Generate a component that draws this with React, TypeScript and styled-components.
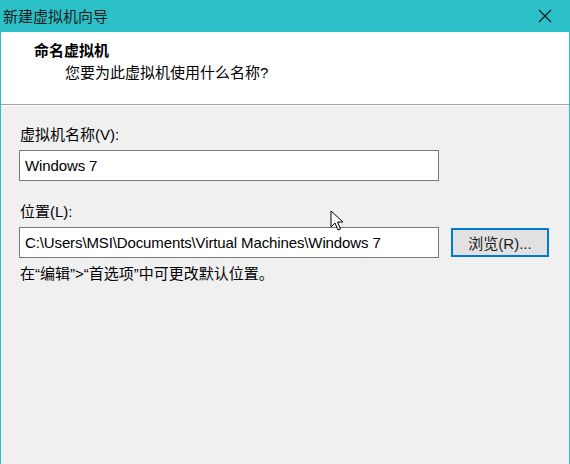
import React from "react";
import styled, { createGlobalStyle } from "styled-components";

const GlobalStyle = createGlobalStyle`
  html, body {
    margin: 0;
    padding: 0;
    background: #f0f0f0;
  }
  * {
    box-sizing: border-box;
  }
`;

const font = `"Segoe UI", "Liberation Sans", "Noto Sans CJK SC", sans-serif`;

const Window = styled.div`
  position: relative;
  width: 570px;
  height: 464px;
  display: flex;
  flex-direction: column;
  border-left: 1px solid #2cc0c8;
  border-right: 1px solid #2cc0c8;
  background: #f0f0f0;
  font-family: ${font};
  font-size: 15px;
  color: #000;
  overflow: hidden;
`;

const TitleBar = styled.div`
  height: 32px;
  flex-shrink: 0;
  background: #2cc0c8;
  display: flex;
  align-items: center;
  justify-content: space-between;
  padding: 0 0 0 3px;
  color: #1e1e1e;
  margin: 0 -1px;
`;

const TitleText = styled.span`
  font-size: 15px;
  line-height: 1;
`;

const CloseButton = styled.div`
  width: 46px;
  height: 32px;
  display: flex;
  align-items: center;
  justify-content: center;
  margin-right: 2px;
`;

const Header = styled.div`
  height: 73px;
  flex-shrink: 0;
  background: #fff;
  border-bottom: 1px solid #a0a0a0;
  box-shadow: 0 1px 0 #ffffff;
  padding: 8px 0 0 33px;
`;

const HeaderTitle = styled.div`
  font-weight: bold;
  font-size: 15px;
  line-height: 22px;
`;

const HeaderSub = styled.div`
  margin-left: 31px;
  line-height: 22px;
`;

const Body = styled.div`
  flex: 1;
  padding: 20px 0 0 18px;
  display: flex;
  flex-direction: column;
`;

const Label = styled.div<{ $top?: number }>`
  padding-left: 1px;
  line-height: 20px;
  margin-top: ${({ $top }) => $top ?? 0}px;
  margin-bottom: 5px;
`;

const Row = styled.div`
  display: flex;
  align-items: center;
  gap: 12px;
`;

const TextBox = styled.div`
  width: 420px;
  height: 31px;
  background: #fff;
  border: 1px solid #7a7a7a;
  padding: 0 0 0 5px;
  display: flex;
  align-items: center;
  line-height: 1;
  letter-spacing: -0.12px;
  white-space: nowrap;
  overflow: hidden;
`;

const Button = styled.div`
  width: 98px;
  height: 29px;
  background: #e1e1e1;
  border: 2px solid #0078d7;
  display: flex;
  align-items: center;
  justify-content: center;
  color: #1a1a1a;
`;

const Hint = styled.div`
  margin-top: 5px;
  padding-left: 1px;
  line-height: 22px;
`;

const Cursor = styled.svg`
  position: absolute;
  left: 329px;
  top: 210px;
`;

export default function App() {
  return (
    <>
      <GlobalStyle />
      <Window>
        <TitleBar>
          <TitleText>新建虚拟机向导</TitleText>
          <CloseButton>
            <svg width="14" height="14" viewBox="0 0 14 14">
              <path d="M1 1 L13 13 M13 1 L1 13" stroke="#111" strokeWidth="1.1" />
            </svg>
          </CloseButton>
        </TitleBar>
        <Header>
          <HeaderTitle>命名虚拟机</HeaderTitle>
          <HeaderSub>您要为此虚拟机使用什么名称?</HeaderSub>
        </Header>
        <Body>
          <Label>虚拟机名称(V):</Label>
          <TextBox>Windows 7</TextBox>
          <Label $top={21}>位置(L):</Label>
          <Row>
            <TextBox>C:\Users\MSI\Documents\Virtual Machines\Windows 7</TextBox>
            <Button>浏览(R)...</Button>
          </Row>
          <Hint>在“编辑”&gt;“首选项”中可更改默认位置。</Hint>
        </Body>
        <Cursor width="14" height="22" viewBox="0 0 14 22">
          <path
            d="M1 1 L1 17 L5 13 L8 20 L10.5 19 L7.5 12 L13 12 Z"
            fill="#fff"
            stroke="#000"
            strokeWidth="1"
            strokeLinejoin="miter"
          />
        </Cursor>
      </Window>
    </>
  );
}
